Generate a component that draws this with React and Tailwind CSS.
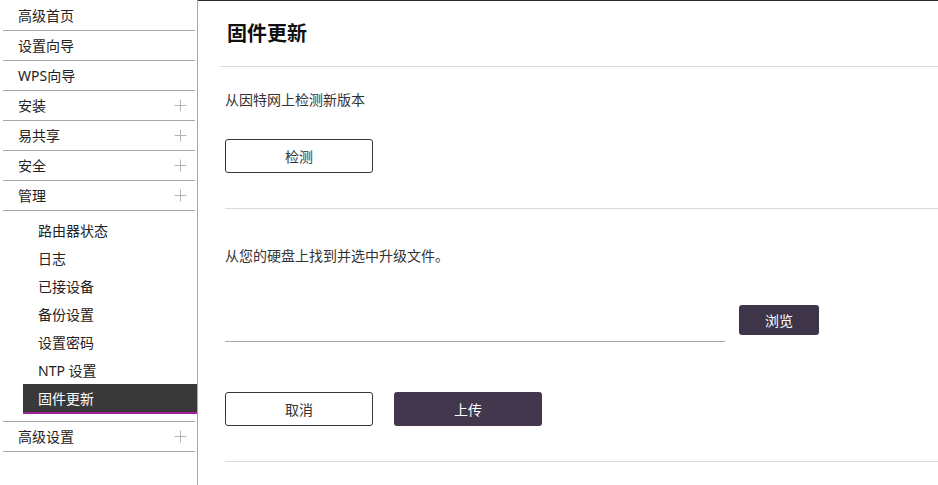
import React from 'react';

const FONT = { fontFamily: '"Noto Sans", "Noto Sans CJK SC", sans-serif' };

const topItems = [
  { label: '高级首页' },
  { label: '设置向导' },
  { label: 'WPS向导' },
  { label: '安装', plus: true },
  { label: '易共享', plus: true },
  { label: '安全', plus: true },
  { label: '管理', plus: true },
];

const subItems = ['路由器状态', '日志', '已接设备', '备份设置', '设置密码', 'NTP 设置', '固件更新'];

const Plus = () => (
  <svg width="13" height="13" viewBox="0 0 13 13" className="shrink-0">
    <path d="M6.5 0.5v12M0.5 6.5h12" stroke="#b5b5b5" strokeWidth="1" fill="none" />
  </svg>
);

const NavRow = ({ label, plus }) => (
  <div className="h-[30px] ml-[3px] mr-[2px] border-b border-[#a8a8a8] flex items-center justify-between pl-[15px] pr-[8px]">
    <span className="text-[14px] text-[#222]">{label}</span>
    {plus && <Plus />}
  </div>
);

export default function App() {
  return (
    <div className="flex w-[938px] h-[485px] bg-white overflow-hidden" style={FONT}>
      {/* Sidebar */}
      <div className="w-[198px] shrink-0 border-r border-[#a8a8a8] pt-px">
        {topItems.map((it) => (
          <NavRow key={it.label} {...it} />
        ))}
        <div className="ml-[3px] mr-[2px] border-b border-[#a8a8a8] pt-[5px] pb-[7px]">
          {subItems.map((s) => {
            const active = s === '固件更新';
            return (
              <div
                key={s}
                className={
                  active
                    ? 'h-[30px] ml-[20px] -mr-[2px] pl-[15px] flex items-center bg-[#393939] border-b-2 border-[#a3229a] text-white text-[14px]'
                    : 'h-[28px] pl-[35px] flex items-center text-[14px] text-[#222]'
                }
              >
                {s}
              </div>
            );
          })}
        </div>
        <NavRow label="高级设置" plus />
      </div>

      {/* Main */}
      <div className="flex-1 border-t border-[#2a2a2a]">
        <div className="h-[66px] ml-[22px] border-b border-[#d6dce1] flex items-center pl-[7px]">
          <h1 className="text-[20px] font-bold text-[#111]">固件更新</h1>
        </div>

        <div className="ml-[27px] border-b border-[#d6dce1] pt-[23px] pb-[35px]">
          <p className="text-[14px] leading-[20px] text-[#333]">从因特网上检测新版本</p>
          <button className="mt-[29px] w-[148px] h-[34px] border border-[#3a3340] rounded-[3px] text-[14px] text-[#333] bg-white">
            检测
          </button>
        </div>

        <div className="ml-[27px] border-b border-[#d6dce1] pt-[37px] pb-[35px]">
          <p className="text-[14px] leading-[20px] text-[#333]">从您的硬盘上找到并选中升级文件。</p>
          <div className="mt-[39px] flex items-start gap-[14px]">
            <div className="w-[500px] h-[37px] border-b border-[#a8a8a8]" />
            <button className="w-[80px] h-[30px] rounded-[3px] bg-[#3f3549] text-white text-[14px]">浏览</button>
          </div>
          <div className="mt-[50px] flex gap-[21px]">
            <button className="w-[148px] h-[34px] border border-[#3a3340] rounded-[3px] text-[14px] text-[#333] bg-white">
              取消
            </button>
            <button className="w-[148px] h-[34px] rounded-[3px] bg-[#42374c] text-white text-[14px]">上传</button>
          </div>
        </div>
      </div>
    </div>
  );
}
